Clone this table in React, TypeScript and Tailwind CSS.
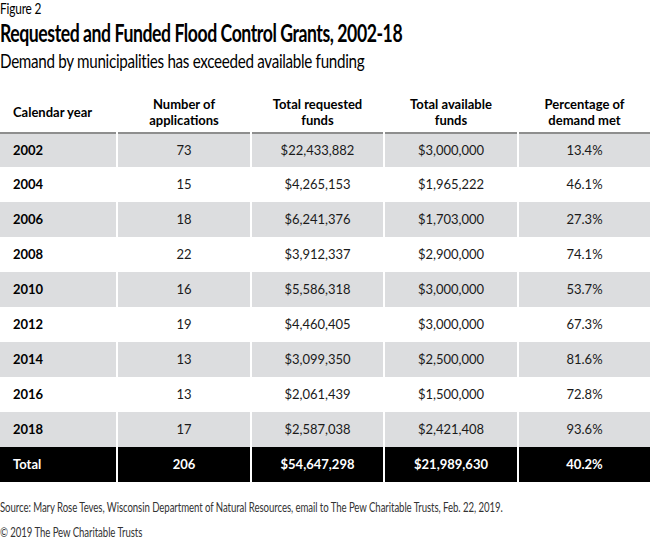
import React from "react";

const rows = [
  ["2002", "73", "$22,433,882", "$3,000,000", "13.4%"],
  ["2004", "15", "$4,265,153", "$1,965,222", "46.1%"],
  ["2006", "18", "$6,241,376", "$1,703,000", "27.3%"],
  ["2008", "22", "$3,912,337", "$2,900,000", "74.1%"],
  ["2010", "16", "$5,586,318", "$3,000,000", "53.7%"],
  ["2012", "19", "$4,460,405", "$3,000,000", "67.3%"],
  ["2014", "13", "$3,099,350", "$2,500,000", "81.6%"],
  ["2016", "13", "$2,061,439", "$1,500,000", "72.8%"],
  ["2018", "17", "$2,587,038", "$2,421,408", "93.6%"],
];

const headers = [
  ["Calendar year"],
  ["Number of", "applications"],
  ["Total requested", "funds"],
  ["Total available", "funds"],
  ["Percentage of", "demand met"],
];

export default function App() {
  return (
    <div
      className="w-[650px] h-[540px] bg-white text-black overflow-hidden"
      style={{ fontFamily: "Lato, 'Open Sans', sans-serif" }}
    >
      <div className="text-[15px] leading-[16px] tracking-[-0.2px] whitespace-nowrap origin-left scale-x-[0.79]">
        Figure 2
      </div>
      <div className="text-[24px] leading-[28px] font-bold tracking-[-0.6px] mt-[3px] whitespace-nowrap origin-left scale-x-[0.735]">
        Requested and Funded Flood Control Grants, 2002-18
      </div>
      <div className="text-[20px] leading-[24px] tracking-[-0.4px] mt-[1px] whitespace-nowrap origin-left scale-x-[0.76]">
        Demand by municipalities has exceeded available funding
      </div>

      <div className="grid grid-cols-[116px_132px_131px_132px_131px] gap-x-[2px] mt-[20px]">
        {headers.map((h, i) => (
          <div
            key={i}
            className={`h-[40px] flex flex-col justify-center text-[13px] leading-[16px] font-bold ${
              i === 0 ? "items-start pl-[13px]" : "items-center text-center"
            }`}
          >
            {h.map((l, j) => (
              <span key={j}>{l}</span>
            ))}
          </div>
        ))}
        {rows.map((r, ri) =>
          r.map((c, ci) => (
            <div
              key={`${ri}-${ci}`}
              className={`h-[35px] flex items-center text-[13px] ${
                ri % 2 === 0 ? "bg-[#dcdddf]" : "bg-white"
              } ${ri === 0 ? "border-t-2 border-[#8e8e8e]" : ""} ${
                ci === 0 ? "pl-[13px] font-bold" : "justify-center text-[#1a1a1a]"
              }`}
            >
              {c}
            </div>
          ))
        )}
        {["Total", "206", "$54,647,298", "$21,989,630", "40.2%"].map((c, ci) => (
          <div
            key={`t-${ci}`}
            className={`h-[35px] flex items-center text-[13px] font-bold bg-black text-white ${
              ci === 0 ? "pl-[13px]" : "justify-center"
            }`}
          >
            {c}
          </div>
        ))}
      </div>

      <div className="text-[13px] leading-[15px] text-[#333] mt-[18px] tracking-[-0.1px] whitespace-nowrap origin-left scale-x-[0.74]">
        Source: Mary Rose Teves, Wisconsin Department of Natural Resources, email to The Pew Charitable Trusts, Feb. 22, 2019.
      </div>
      <div className="text-[13px] leading-[15px] text-[#333] mt-[10px] tracking-[-0.1px] whitespace-nowrap origin-left scale-x-[0.74]">
        © 2019 The Pew Charitable Trusts
      </div>
    </div>
  );
}
